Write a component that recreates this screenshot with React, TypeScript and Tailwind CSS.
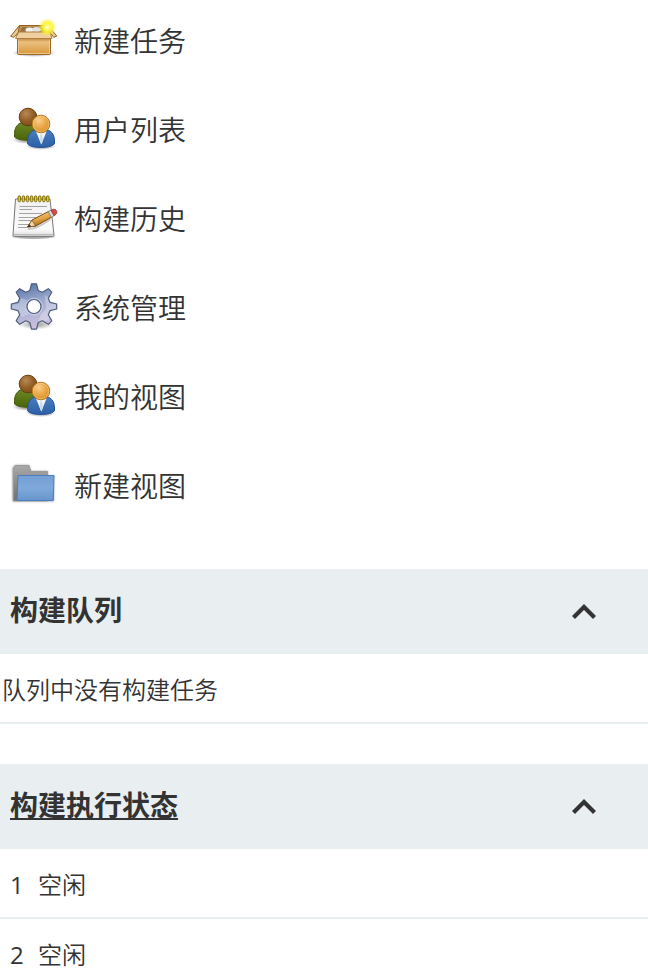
import { useState } from 'react';
import type { ReactNode } from 'react';

function PackageIcon() {
  return (
    <svg viewBox="0 0 48 48" className="size-12 shrink-0" aria-hidden="true">
      <defs>
        <linearGradient id="boxFront" x1="0" y1="0" x2="0" y2="1">
          <stop offset="0" stopColor="#d9a456" />
          <stop offset="0.45" stopColor="#e9bd7b" />
          <stop offset="1" stopColor="#d8963a" />
        </linearGradient>
        <radialGradient id="boxSun">
          <stop offset="0" stopColor="#fffff0" />
          <stop offset="0.3" stopColor="#fff95a" />
          <stop offset="0.6" stopColor="#fdf22b" stopOpacity="0.85" />
          <stop offset="1" stopColor="#fdf22b" stopOpacity="0" />
        </radialGradient>
        <radialGradient id="boxShadow">
          <stop offset="0.5" stopColor="#000" stopOpacity="0.3" />
          <stop offset="1" stopColor="#000" stopOpacity="0" />
        </radialGradient>
      </defs>
      <ellipse cx="24" cy="37" rx="22" ry="4" fill="url(#boxShadow)" />
      <path d="M9.5 9.5H38L41 18H6.5Z" fill="#c39551" stroke="#94601f" />
      <path d="M12 11H36L38 16H10Z" fill="#96744a" />
      <ellipse cx="19.5" cy="14" rx="4" ry="2.6" fill="#f3f3f0" />
      <ellipse cx="26.5" cy="13.6" rx="4.5" ry="2.6" fill="#e4e4e0" />
      <rect x="7.5" y="17.5" width="33" height="21" rx="1.5" fill="url(#boxFront)" stroke="#9a6726" />
      <path d="M8.5 22V37.5H39.5V22" fill="none" stroke="#f3d09b" strokeOpacity="0.8" />
      <path d="M8 22.5H40V24.5H8Z" fill="#a8712a" fillOpacity="0.4" />
      <path d="M8.5 16H40L42 22.5H5.5Z" fill="#efcf9e" stroke="#b07f40" />
      <path d="M9.5 9.5L8.2 16.6L3.8 21.4L0.7 20.2Z" fill="#eac894" stroke="#93601d" />
      <path d="M38 9.8L40 16.6L43.8 21.4L46.8 20Z" fill="#eac894" stroke="#93601d" />
      <circle cx="37.3" cy="11.3" r="9" fill="url(#boxSun)" />
    </svg>
  );
}

function UsersIcon() {
  return (
    <svg viewBox="0 0 48 48" className="size-12 shrink-0" aria-hidden="true">
      <defs>
        <radialGradient id="headBrown" cx="0.38" cy="0.3" r="0.75">
          <stop offset="0" stopColor="#b98a52" />
          <stop offset="0.55" stopColor="#946028" />
          <stop offset="1" stopColor="#7c4c18" />
        </radialGradient>
        <radialGradient id="headOrange" cx="0.38" cy="0.3" r="0.75">
          <stop offset="0" stopColor="#f9cf8c" />
          <stop offset="0.55" stopColor="#e9a745" />
          <stop offset="1" stopColor="#d99026" />
        </radialGradient>
        <linearGradient id="bodyGreen" x1="0" y1="0" x2="0" y2="1">
          <stop offset="0" stopColor="#6b8926" />
          <stop offset="1" stopColor="#4b640a" />
        </linearGradient>
        <linearGradient id="bodyBlue" x1="0" y1="0" x2="0" y2="1">
          <stop offset="0" stopColor="#4a7fc0" />
          <stop offset="1" stopColor="#2c5fa6" />
        </linearGradient>
        <radialGradient id="userShadow">
          <stop offset="0.4" stopColor="#000" stopOpacity="0.35" />
          <stop offset="1" stopColor="#000" stopOpacity="0" />
        </radialGradient>
      </defs>
      <ellipse cx="19" cy="35" rx="17" ry="4" fill="url(#userShadow)" />
      <ellipse cx="31" cy="41" rx="15" ry="4" fill="url(#userShadow)" />
      <path
        d="M4.5 28.5C4.5 21.5 9 17 15 17H21C27 17 31 21.5 31 28.5V31.5C29 34.5 24 35.2 18 35.2C12 35.2 7 34.5 4.5 32Z"
        fill="url(#bodyGreen)"
        stroke="#415808"
      />
      <circle cx="18" cy="12" r="8.8" fill="url(#headBrown)" stroke="#6b3f0f" />
      <path
        d="M17.7 36C17.7 29 22 24.5 28 24.5H34.5C40.5 24.5 44.5 29 44.5 36V38.8C42 41.6 37 42.4 31 42.4C25 42.4 20 41.6 17.7 39Z"
        fill="url(#bodyBlue)"
        stroke="#23509a"
      />
      <path d="M26 26.5L31.3 39.5L36.5 26.5Z" fill="#f4f6f9" />
      <path d="M30.2 29.5H32.2L33 35.5L31.3 39.5L29.7 35.5Z" fill="#cfdae8" />
      <circle cx="31" cy="19" r="8.8" fill="url(#headOrange)" stroke="#b8751b" />
      <circle cx="31" cy="19" r="7.8" fill="none" stroke="#fce0ae" strokeOpacity="0.4" />
    </svg>
  );
}

function NotepadIcon() {
  return (
    <svg viewBox="0 0 48 48" className="size-12 shrink-0" aria-hidden="true">
      <defs>
        <linearGradient id="paper" x1="0" y1="0" x2="0" y2="1">
          <stop offset="0" stopColor="#f0f0f0" />
          <stop offset="0.8" stopColor="#fbfbfb" />
          <stop offset="1" stopColor="#dcdcdc" />
        </linearGradient>
        <linearGradient id="pencil" x1="0.3" y1="0.2" x2="0.6" y2="0.9">
          <stop offset="0" stopColor="#f3cb7d" />
          <stop offset="0.5" stopColor="#dfa03e" />
          <stop offset="1" stopColor="#96601b" />
        </linearGradient>
        <radialGradient id="paperShadow">
          <stop offset="0.6" stopColor="#000" stopOpacity="0.3" />
          <stop offset="1" stopColor="#000" stopOpacity="0" />
        </radialGradient>
      </defs>
      <ellipse cx="23.5" cy="43" rx="23" ry="2.5" fill="url(#paperShadow)" />
      <path d="M5.5 5H40L44 41Q44.2 42.6 42.5 42.6H4.3Q2.8 42.6 3 41Z" fill="url(#paper)" stroke="#777" />
      <path d="M4 40.8H43" stroke="#aaa" />
      <g stroke="#a3a3a3">
        <path d="M9.5 12.5H37" />
        <path d="M9.5 15.5H22" />
        <path d="M9 19.5H32" />
        <path d="M8.7 23.5H30" />
        <path d="M8.5 26.5H26" />
        <path d="M8.2 30.5H20" />
        <path d="M8 33.5H17" />
      </g>
      <g fill="#e3c92f" stroke="#75660b" strokeWidth="0.9">
        <rect x="8" y="1.8" width="2.5" height="6" rx="1.2" />
        <rect x="12.1" y="1.8" width="2.5" height="6" rx="1.2" />
        <rect x="16.2" y="1.8" width="2.5" height="6" rx="1.2" />
        <rect x="20.3" y="1.8" width="2.5" height="6" rx="1.2" />
        <rect x="24.4" y="1.8" width="2.5" height="6" rx="1.2" />
        <rect x="28.5" y="1.8" width="2.5" height="6" rx="1.2" />
        <rect x="32.6" y="1.8" width="2.5" height="6" rx="1.2" />
        <rect x="36.5" y="1.8" width="2.5" height="6" rx="1.2" />
      </g>
      <path d="M18 35C25 35.5 33 30.5 40 25.5" fill="none" stroke="#000" strokeOpacity="0.2" strokeWidth="2" />
      <path d="M17.5 33L22 26L39 17.2L42 23L25.5 32.2Z" fill="url(#pencil)" stroke="#7b4c14" />
      <path d="M17.5 33L22 26.2L25.5 32Z" fill="#f2d9ab" stroke="#7b4c14" strokeWidth="0.7" />
      <path d="M17.2 33.2L19.4 30L21 32.5Z" fill="#2b2b2b" />
      <path d="M38.2 17.6L41.2 16.1L44.2 21.8L41.3 23.4Z" fill="#d5d8dc" stroke="#6d6d6d" strokeWidth="0.7" />
      <path d="M41 16.2L43.3 15.2Q46 14.8 46.9 17.6Q47 20.2 44.2 21.8Z" fill="#dc4b43" stroke="#98271f" strokeWidth="0.7" />
    </svg>
  );
}

function GearIcon() {
  return (
    <svg viewBox="0 0 48 48" className="size-12 shrink-0" aria-hidden="true">
      <defs>
        <linearGradient id="gearFill" x1="0.35" y1="0" x2="0.6" y2="1">
          <stop offset="0" stopColor="#5876a8" />
          <stop offset="0.45" stopColor="#a3aed0" />
          <stop offset="1" stopColor="#cfc1df" />
        </linearGradient>
        <radialGradient id="gearShadow">
          <stop offset="0.3" stopColor="#000" stopOpacity="0.3" />
          <stop offset="1" stopColor="#000" stopOpacity="0" />
        </radialGradient>
        <path
          id="gearShape"
          fillRule="evenodd"
          d="M21.5 0.8H26.5L28.2 7.5L32.3 9.2L38.3 5.7L41.8 9.2L38.3 15.2L40 19.3L46.7 21V26L40 27.7L38.3 31.8L41.8 37.8L38.3 41.3L32.3 37.8L28.2 39.5L26.5 46.2H21.5L19.8 39.5L15.7 37.8L9.7 41.3L6.2 37.8L9.7 31.8L8 27.7L1.3 26V21L8 19.3L9.7 15.2L6.2 9.2L9.7 5.7L15.7 9.2L19.8 7.5ZM24 16.5A7 7 0 1 0 24 30.5A7 7 0 1 0 24 16.5Z"
        />
        <clipPath id="gearClip">
          <use href="#gearShape" clipRule="evenodd" />
        </clipPath>
      </defs>
      <ellipse cx="26" cy="41.5" rx="18" ry="5" fill="url(#gearShadow)" />
      <use href="#gearShape" fill="url(#gearFill)" />
      <g clipPath="url(#gearClip)">
        <path d="M1 22L9 20L11 15L17 17L15 24L19 31L12 34L3 28Z" fill="#e4e9f3" fillOpacity="0.35" />
        <path d="M35 12L47 20V28L36 38L28 40L31 31L36 26Z" fill="#edf1f8" fillOpacity="0.35" />
      </g>
      <circle cx="24" cy="23.5" r="7" fill="#fff" />
      <circle cx="24" cy="23.5" r="8.3" fill="none" stroke="#d9deeb" strokeOpacity="0.7" />
      <use href="#gearShape" fill="none" stroke="#4f5c7c" strokeWidth="1.2" strokeLinejoin="round" />
    </svg>
  );
}

function FolderIcon() {
  return (
    <svg viewBox="0 0 48 48" className="size-12 shrink-0" aria-hidden="true">
      <defs>
        <linearGradient id="folderBack" x1="0" y1="0" x2="0" y2="1">
          <stop offset="0" stopColor="#a8a8a8" />
          <stop offset="1" stopColor="#707070" />
        </linearGradient>
        <linearGradient id="folderFront" x1="0" y1="0" x2="0" y2="1">
          <stop offset="0" stopColor="#729fd4" />
          <stop offset="0.5" stopColor="#7fa9dc" />
          <stop offset="1" stopColor="#6795cc" />
        </linearGradient>
        <filter id="folderBlur" x="-10%" y="-10%" width="120%" height="120%">
          <feGaussianBlur stdDeviation="1" />
        </filter>
        <filter id="folderSoft" x="-10%" y="-10%" width="120%" height="120%">
          <feGaussianBlur stdDeviation="0.6" />
        </filter>
      </defs>
      <path d="M2.5 40.5V7L4.5 4H19L21 10H38V15H44V40.5Z" fill="#777" fillOpacity="0.6" filter="url(#folderBlur)" />
      <g filter="url(#folderSoft)">
        <path d="M3.2 40V7.2L5.2 4.5H19L20.8 10.5H37.5V40Z" fill="url(#folderBack)" stroke="#9a9a9a" />
        <path d="M8 14.5H44L43.3 39.5H7Z" fill="url(#folderFront)" stroke="#4a7fbf" />
      </g>
    </svg>
  );
}

const tasks = [
  { label: '新建任务', icon: <PackageIcon /> },
  { label: '用户列表', icon: <UsersIcon /> },
  { label: '构建历史', icon: <NotepadIcon /> },
  { label: '系统管理', icon: <GearIcon /> },
  { label: '我的视图', icon: <UsersIcon /> },
  { label: '新建视图', icon: <FolderIcon /> },
];

const executors = [
  { id: 1, status: '空闲' },
  { id: 2, status: '空闲' },
];

function Pane({ title, children }: { title: ReactNode; children: ReactNode }) {
  const [open, setOpen] = useState(true);

  return (
    <section>
      <div className="flex items-center justify-between bg-[#e9eef1] pt-[19px] pb-[18px] pr-12 pl-[10px]">
        <h2 className="pb-1 font-['Open_Sans','Noto_Sans_CJK_SC',sans-serif] text-[28px] leading-[44px] font-bold">
          {title}
        </h2>
        <button
          type="button"
          aria-label={open ? '折叠' : '展开'}
          aria-expanded={open}
          className="flex size-8 items-center justify-center"
          onClick={() => setOpen(!open)}
        >
          <svg viewBox="0 0 32 32" className={open ? 'size-8' : 'size-8 rotate-180'} aria-hidden="true">
            <path d="M5.5 21.5L16 11L26.5 21.5" fill="none" stroke="#333" strokeWidth="4.2" />
          </svg>
        </button>
      </div>
      {open && children}
    </section>
  );
}

export default function App() {
  return (
    <div className="min-h-screen bg-white font-['Open_Sans','Noto_Sans_CJK_SC_DemiLight','Noto_Sans_CJK_SC',sans-serif] text-[#333]">
      <nav className="pt-4">
        <ul className="flex flex-col gap-[41px]">
          {tasks.map((task) => (
            <li key={task.label}>
              <a href="#" className="flex h-12 items-center gap-4 pl-[10px] text-[28px]">
                {task.icon}
                <span className="pt-[2px]">{task.label}</span>
              </a>
            </li>
          ))}
        </ul>
      </nav>

      <div className="mt-[60px] flex flex-col gap-10">
        <Pane title="构建队列">
          <p className="border-b-2 border-[#e9eef1] pt-[18px] pb-[14px] pl-[2px] text-2xl leading-9">
            队列中没有构建任务
          </p>
        </Pane>

        <Pane
          title={
            <a href="#" className="underline decoration-2 underline-offset-2">
              构建执行状态
            </a>
          }
        >
          <table className="w-full text-2xl leading-9">
            <tbody>
              {executors.map((executor) => (
                <tr key={executor.id} className="border-b-2 border-[#e9eef1]">
                  <td className="w-[38px] pt-[18px] pb-[14px] pl-[10px]">{executor.id}</td>
                  <td className="pt-[18px] pb-[14px]">{executor.status}</td>
                </tr>
              ))}
            </tbody>
          </table>
        </Pane>
      </div>
    </div>
  );
}
